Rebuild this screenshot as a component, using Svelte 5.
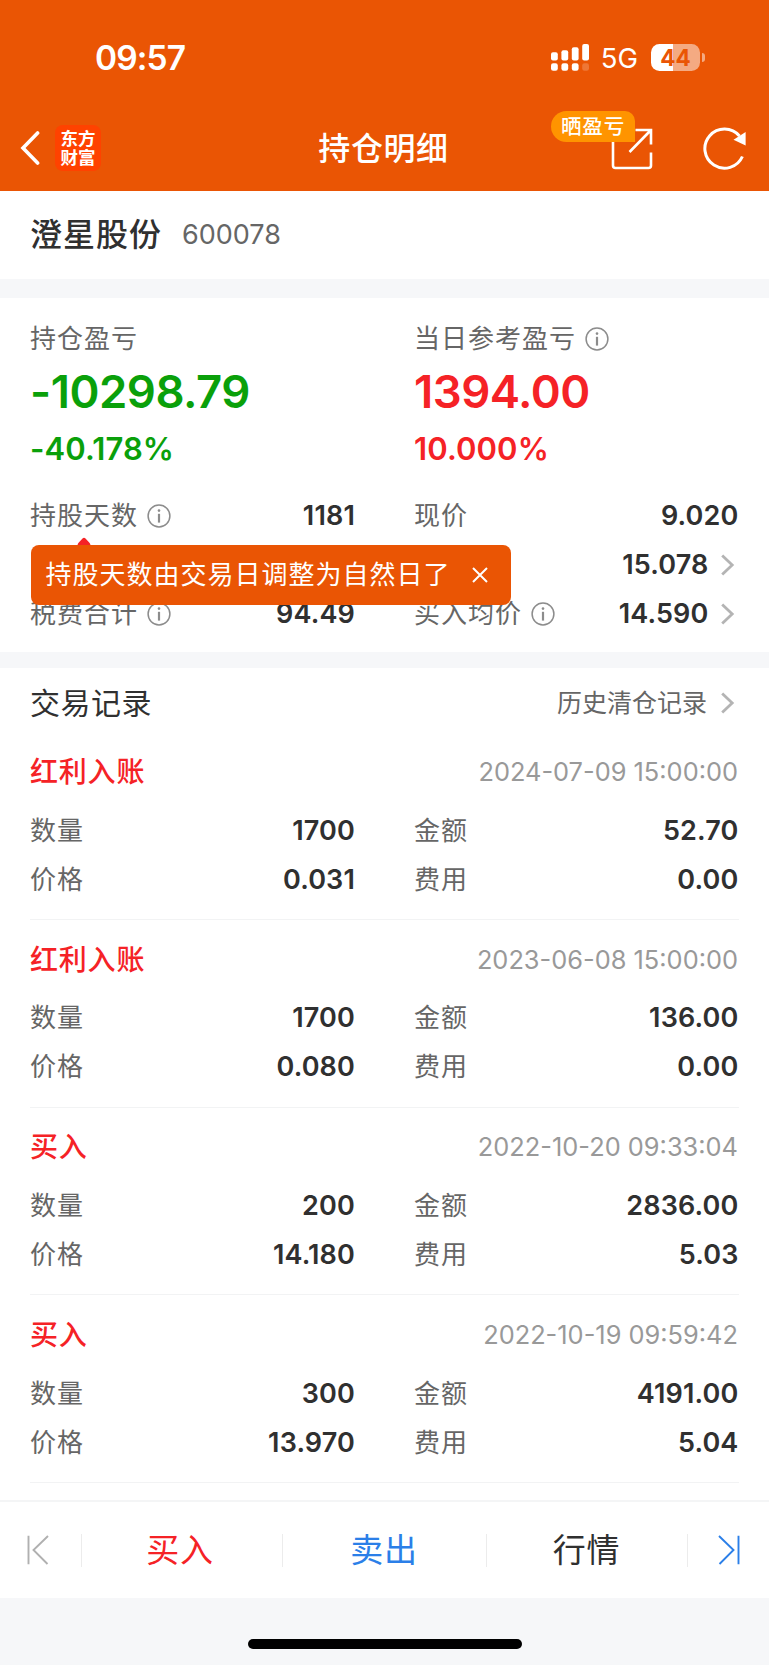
<script>
  const records = [
    { type: '红利入账', time: '2024-07-09 15:00:00', qty: '1700', amount: '52.70', price: '0.031', fee: '0.00' },
    { type: '红利入账', time: '2023-06-08 15:00:00', qty: '1700', amount: '136.00', price: '0.080', fee: '0.00' },
    { type: '买入', time: '2022-10-20 09:33:04', qty: '200', amount: '2836.00', price: '14.180', fee: '5.03' },
    { type: '买入', time: '2022-10-19 09:59:42', qty: '300', amount: '4191.00', price: '13.970', fee: '5.04' }
  ];
</script>

{#snippet info()}
  <svg class="info" width="24" height="24" viewBox="0 0 24 24" fill="none" stroke="#8c8c8c">
    <circle cx="12" cy="12" r="10.9" stroke-width="1.5" />
    <path d="M12 9.8V18.6" stroke-width="2.2" />
    <circle cx="12" cy="6.6" r="1.3" fill="#8c8c8c" stroke="none" />
  </svg>
{/snippet}

{#snippet chevron()}
  <svg class="chev" width="14" height="22" viewBox="0 0 14 22" fill="none" stroke="#b4b4b4" stroke-width="2.8">
    <path d="M1.2 1.4L11.2 11L1.2 20.6" />
  </svg>
{/snippet}

<div class="page">
  <header>
    <div class="status">
      <span class="clock">09:57</span>
      <div class="signals">
        <svg width="38" height="28" viewBox="0 0 38 28" fill="#fff">
          <rect x="0" y="8.3" width="6.8" height="8.2" rx="2" />
          <rect x="10.4" y="6.3" width="6.8" height="10.2" rx="2" />
          <rect x="20.8" y="3.2" width="6.8" height="13.3" rx="2" />
          <rect x="31.2" y="0" width="6.8" height="16.5" rx="2" />
          <rect x="0" y="19.3" width="6.8" height="7.5" rx="2.2" />
          <rect x="10.4" y="19.3" width="6.8" height="7.5" rx="2.2" />
          <rect x="20.8" y="19.3" width="6.8" height="7.5" rx="2.2" />
          <rect x="31.2" y="19.3" width="6.8" height="7.5" rx="2.2" opacity=".2" />
        </svg>
        <span class="net">5G</span>
        <div class="battery"><span>44</span></div>
        <i class="nub"></i>
      </div>
    </div>
    <div class="nav">
      <div class="side">
        <svg width="20" height="34" viewBox="0 0 20 34" fill="none" stroke="#fff" stroke-width="3.6" stroke-linecap="round">
          <path d="M17.6 2L3 17L17.6 32" />
        </svg>
        <div class="logo"><span>东方</span><span>财富</span></div>
      </div>
      <h1>持仓明细</h1>
      <div class="side end">
        <div class="share">
          <svg width="42" height="42" viewBox="0 0 42 42" fill="none" stroke="#fff" stroke-width="2.6">
            <path d="M2 10V37.5Q2 40 4.500 40H37.500Q40 40 40 37.500V24.500" />
            <path d="M24.500 2H40V16.500M39.500 2.500L18.500 24" />
          </svg>
          <em>晒盈亏</em>
        </div>
        <svg width="46" height="46" viewBox="0 0 46 46" fill="none">
          <path d="M41.400 31.500A19.600 19.600 0 1 1 38.500 11" stroke="#fff" stroke-width="3" />
          <path d="M32.500 14.800L44.600 7V20.500Z" fill="#fff" />
        </svg>
      </div>
    </div>
  </header>

  <section class="stock"><h2>澄星股份</h2><span>600078</span></section>

  <section class="summary">
    <div class="cols pnl">
      <div class="down">
        <div class="label">持仓盈亏</div>
        <div class="big">-10298.79</div>
        <div class="pct">-40.178%</div>
      </div>
      <div class="up">
        <div class="label">当日参考盈亏{@render info()}</div>
        <div class="big">1394.00</div>
        <div class="pct">10.000%</div>
      </div>
    </div>
    <div class="cols">
      <div class="row"><span class="label">持股天数{@render info()}</span><b>1181</b></div>
      <div class="row"><span class="label">现价</span><b>9.020</b></div>
      <div class="row"></div>
      <div class="row"><span class="label"></span><b>15.078{@render chevron()}</b></div>
      <div class="row"><span class="label">税费合计{@render info()}</span><b>94.49</b></div>
      <div class="row"><span class="label">买入均价{@render info()}</span><b>14.590{@render chevron()}</b></div>
    </div>
    <div class="tip">
      <svg class="arrow" width="14" height="8" viewBox="0 0 14 8"><path d="M0.500 8Q0.800 6.300 2 5.300L5.500 1.500Q7 0 8.500 1.500L12 5.300Q13.200 6.300 13.500 8Z" fill="#f52226" /></svg>
      <span>持股天数由交易日调整为自然日了</span>
      <svg width="16" height="16" viewBox="0 0 16 16" stroke="#fff" stroke-width="2"><path d="M1 1L15 15M15 1L1 15" /></svg>
    </div>
  </section>

  <section class="trades">
    <div class="trades-head"><h3>交易记录</h3><a>历史清仓记录{@render chevron()}</a></div>
    {#each records as r}
      <article>
        <div class="title"><strong>{r.type}</strong><time>{r.time}</time></div>
        <div class="cols">
          <div class="row"><span class="label">数量</span><b>{r.qty}</b></div>
          <div class="row"><span class="label">金额</span><b>{r.amount}</b></div>
          <div class="row"><span class="label">价格</span><b>{r.price}</b></div>
          <div class="row"><span class="label">费用</span><b>{r.fee}</b></div>
        </div>
      </article>
    {/each}
  </section>

  <nav class="bar">
    <div>
      <svg width="24" height="30" viewBox="0 0 24 30" fill="none" stroke="#b0b0b0" stroke-width="1.900"><path d="M2.500 0.700V29.300M22 1L7.500 15L21.500 29" /></svg>
    </div>
    <div class="buy">买入</div>
    <div class="sell">卖出</div>
    <div>行情</div>
    <div>
      <svg width="24" height="30" viewBox="0 0 24 30" fill="none" stroke="#2b7fe8" stroke-width="1.900"><path d="M21.500 0.700V29.300M2 1L16.500 15L2.500 29" /></svg>
    </div>
  </nav>
  <footer><i></i></footer>
</div>

<style>
  :global(body) { margin: 0; background: #f6f7f9; }
  .page {
    width: 769px;
    height: 1665px;
    overflow: hidden;
    display: flex;
    flex-direction: column;
    background: #f6f7f9;
    color: #303030;
    font-family: Inter, "Noto Sans CJK SC", sans-serif;
    font-size: 26px;
    line-height: 1.2;
  }
  .page * { box-sizing: border-box; }
  h1, h2, h3 { margin: 0; font-weight: 500; }
  svg { display: block; flex: none; }
  section { background: #fff; flex: none; }

  header { height: 191px; flex: none; background: #ea5504; color: #fff; }
  .status { height: 108px; padding: 7px 64px 0 95px; display: flex; justify-content: space-between; align-items: center; }
  .clock { font-size: 33.500px; font-weight: 600; letter-spacing: -.9px; padding-top: 2px; }
  .signals { display: flex; align-items: center; }
  .net { font-size: 27.500px; margin: 1px 13px 0 12px; }
  .battery {
    width: 49px; height: 27px; border-radius: 8.500px; display: flex; align-items: center; justify-content: center;
    background: linear-gradient(90deg, #fff 21.500px, #f4aa82 21.500px);
    color: #ea5504; font-size: 22.500px; font-weight: 700;
  }
  .nub { width: 3px; height: 9px; margin-left: 2px; border-radius: 0 5px 5px 0; background: #f4aa82; }
  .nav { height: 80px; padding: 0 22px 0 20px; display: flex; align-items: center; justify-content: space-between; }
  .side { width: 260px; display: flex; align-items: center; gap: 15px; }
  .end { justify-content: flex-end; gap: 48px; }
  .nav h1 { font-size: 32px; letter-spacing: .6px; white-space: nowrap; padding-top: 2px; }
  .share { margin-top: 1px; }
  .logo {
    width: 46px; height: 46px; border-radius: 8px; background: #ff4200;
    display: flex; flex-direction: column; align-items: center; justify-content: center;
    font-size: 17.500px; line-height: 19.500px; font-weight: 700;
  }
  .share { position: relative; }
  .share em {
    position: absolute; right: 18px; top: -17px; width: 84px; height: 31px;
    border-radius: 15.500px 10px 0 15.500px; background: #ff9400;
    font-style: normal; font-weight: 500; font-size: 20.500px; letter-spacing: .8px; line-height: 31px; text-align: center; white-space: nowrap;
  }

  .stock { height: 88px; padding: 0 30px; display: flex; align-items: center; gap: 20px; }
  .stock h2 { font-size: 32px; letter-spacing: 1px; }
  .stock span { color: #666; font-size: 27px; }

  .summary { position: relative; margin-top: 19px; height: 354px; padding: 20px 30px 0; }
  .cols { display: grid; grid-template-columns: 325px 324.500px; column-gap: 59px; }
  .label { display: flex; align-items: center; color: #666; font-size: 26px; letter-spacing: 1px; white-space: nowrap; }
  .info { margin-left: 8.500px; }
  .pnl .label { height: 41px; margin-bottom: -1px; }
  .big { height: 68px; line-height: 68px; font-size: 45.500px; font-weight: 600; letter-spacing: -.5px; }
  .pct { height: 46px; line-height: 46px; font-size: 31px; font-weight: 600; letter-spacing: .1px; margin-bottom: 19.500px; }
  .down .big, .down .pct { color: #0aa00a; }
  .up .big, .up .pct { color: #f52226; }
  .row { height: 49px; display: flex; align-items: center; justify-content: space-between; }
  .row b { display: flex; align-items: center; font-size: 27px; font-weight: 600; letter-spacing: .15px; padding-top: 1px; }
  .chev { margin: 0 4px 0 12px; }
  .tip {
    position: absolute; left: 31px; top: 247px; width: 480px; height: 60px; padding: 0 23px 0 14.500px;
    display: flex; align-items: center; justify-content: space-between;
    border-radius: 8px; background: #ea5504; color: #fff; letter-spacing: 1px; white-space: nowrap;
  }
  .arrow { position: absolute; left: 46px; top: -8px; }

  .trades { margin-top: 16px; height: 832px; padding: 0 30px; }
  .trades-head { height: 64.300px; padding-top: 5px; display: flex; align-items: center; justify-content: space-between; }
  h3 { font-size: 30px; font-weight: 400; letter-spacing: .5px; }
  .trades-head a { display: flex; align-items: center; color: #666; font-size: 25px; }
  .trades-head .chev { margin-left: 14px; }
  article { height: 187.670px; padding-top: 20px; border-bottom: 1.500px solid #f2f3f4; }
  .title { height: 40px; margin-bottom: 13.500px; display: flex; align-items: center; justify-content: space-between; }
  .title strong { color: #f52226; font-size: 28px; font-weight: 500; letter-spacing: .8px; padding-top: 1px; }
  time { color: #999; font-size: 25.400px; margin-right: 1px; }

  .bar {
    height: 98px; flex: none; border-top: 2px solid #f4f5f6; background: #fff;
    display: grid; grid-template-columns: 81px 201px 204px 201px 82px; font-size: 33px; letter-spacing: .8px;
  }
  .bar div { display: flex; align-items: center; justify-content: center; }
  .bar div:first-child { padding-right: 6px; }
  .bar .buy { padding: 2px 3px 0 0; }
  .bar .sell, .bar div:nth-child(4) { padding-top: 2px; }
  .bar div:last-child { padding-left: 2px; }
  .bar div + div { background: linear-gradient(#ececec, #ececec) 0 50% / 1px 33px no-repeat; }
  .bar .buy { color: #f52226; }
  .bar .sell { color: #2b7fe8; }
  footer { flex: 1; display: flex; justify-content: center; padding-top: 41px; }
  footer i { width: 274px; height: 10px; border-radius: 5px; background: #000; }
</style>
